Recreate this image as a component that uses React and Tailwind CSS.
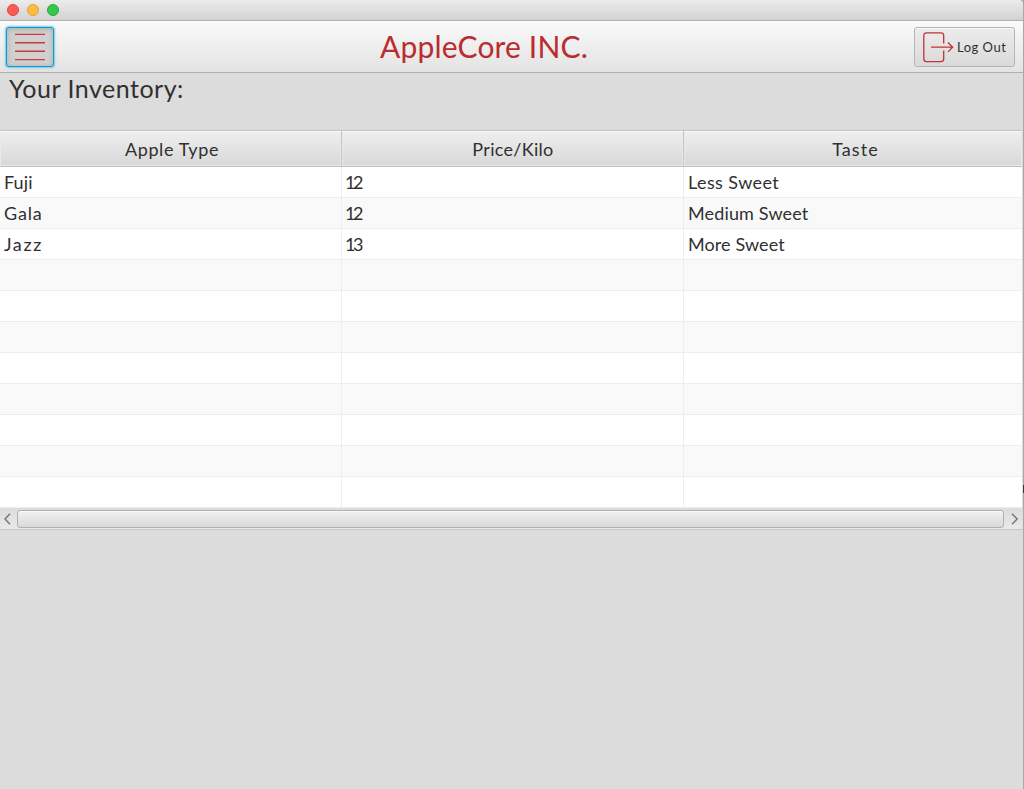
const none = { text: "", tracking: "" };

const rows = [
  [
    { text: "Fuji", tracking: "tracking-[0.1px]" },
    { text: "12", tracking: "tracking-[-2.5px]" },
    { text: "Less Sweet", tracking: "tracking-[0.4px]" },
  ],
  [
    { text: "Gala", tracking: "tracking-[0.8px]" },
    { text: "12", tracking: "tracking-[-2.5px]" },
    { text: "Medium Sweet", tracking: "tracking-[0.15px]" },
  ],
  [
    { text: "Jazz", tracking: "tracking-[1.6px]" },
    { text: "13", tracking: "tracking-[-2.5px]" },
    { text: "More Sweet", tracking: "tracking-[0.1px]" },
  ],
  ...Array.from({ length: 8 }, () => [none, none, none]),
];

const columns = [
  { label: "Apple Type", tracking: "ml-[3px] tracking-[0.6px]", width: "w-[342px]", pad: "pl-1", border: "border-r" },
  { label: "Price/Kilo", tracking: "ml-px tracking-[0.3px]", width: "w-[342px]", pad: "pl-[3px]", border: "border-r" },
  { label: "Taste", tracking: "ml-[5px] tracking-[1.1px]", width: "w-[338px]", pad: "pl-1", border: "" },
];

function TitleBar() {
  return (
    <div className="flex h-[21px] items-center gap-2 rounded-tr border-b border-[#b1b1b1] bg-linear-to-b from-[#ececec] to-[#d2d2d2] pl-[7px]">
      <span className="size-3 rounded-full border border-[#e2463f] bg-[#fc5b57]" />
      <span className="size-3 rounded-full border border-[#e1a235] bg-[#fdbc40]" />
      <span className="size-3 rounded-full border border-[#27aa35] bg-[#34c84a]" />
    </div>
  );
}

function MenuIcon() {
  return (
    <svg width="30" height="28" viewBox="0 0 30 28" stroke="#c83a3e" strokeWidth="1.4">
      <path d="M0 1.4H30M0 9.8H30M0 18.2H30M0 26.6H30" />
    </svg>
  );
}

function LogOutIcon() {
  return (
    <svg className="mt-px" width="31" height="31" viewBox="0 0 31 31" fill="none" stroke="#c23236" strokeWidth="1.3">
      <path d="M20.7 11.5V3.7Q20.7 .8 17.8 .8H3.7Q.8 .8 .8 3.7V26.8Q.8 29.7 3.7 29.7H17.8Q20.7 29.7 20.7 26.8V18.5" />
      <path d="M8 15.2H29.5M25 10.5L29.7 15.2L25 19.9" />
    </svg>
  );
}

function Toolbar() {
  return (
    <div className="flex h-[52px] items-center justify-between border-b border-[#b0b0b0] bg-linear-to-b from-[#fafafa] to-[#e3e3e3] pr-2 pl-1.5">
      <button className="flex h-10 w-12 items-center justify-center rounded-[3px] border border-[#039ed3] bg-[#d0d0d0] shadow-[0_0_2px_1px_#7cc8e4,inset_0_1px_5px_#aaaaaa]">
        <MenuIcon />
      </button>
      <h1 className="pb-0.5 text-[30px] leading-none tracking-[0.15px] text-[#ba2c30]">AppleCore INC.</h1>
      <button className="flex h-10 w-[101px] items-center gap-[3px] rounded-[3px] border border-[#b5b5b5] bg-linear-to-b from-[#ececec] to-[#dadada] pl-2 text-[13px] tracking-[0.5px] whitespace-nowrap shadow-[inset_0_1px_0_#fafafa]">
        <LogOutIcon />
        <span className="pt-0.5">Log Out</span>
      </button>
    </div>
  );
}

function InventoryTable() {
  return (
    <div className="w-[1022px] border-t border-[#c4c4c4] text-[18px]">
      <div className="flex h-9 border-b border-[#c0c0c0]">
        {columns.map((c) => (
          <div
            key={c.label}
            className={`${c.width} ${c.border} flex items-center justify-center border-[#c4c4c4] bg-linear-to-b from-[#efefef] to-[#d8d8d8] pt-0.5 shadow-[inset_0_1px_0_#f8f8f8,inset_0_0_0_1px_#e9e9e9]`}
          >
            <span className={c.tracking}>{c.label}</span>
          </div>
        ))}
      </div>
      {rows.map((row, i) => (
        <div key={i} className="flex h-[31px] border-b border-[#ededed] odd:bg-[#f9f9f9] even:bg-white">
          {row.map((cell, j) => (
            <div key={j} className={`${columns[j].width} ${columns[j].pad} ${columns[j].border} flex items-center border-[#ededed]`}>
              <span className={cell.tracking}>{cell.text}</span>
            </div>
          ))}
        </div>
      ))}
      <ScrollBar />
    </div>
  );
}

function ScrollBar() {
  return (
    <div className="flex h-[22px] items-center border-b border-[#c8c8c8] bg-linear-to-b from-[#dcdcdc] to-[#e9e9e9]">
      <svg className="mx-1" width="8" height="12" viewBox="0 0 8 12" fill="none" stroke="#777" strokeWidth="1.5">
        <path d="M6 .8L1 6L6 11.2" />
      </svg>
      <div className="ml-px h-[18px] w-[987px] rounded-[3px] border border-[#b0b0b0] bg-linear-to-b from-[#f0f0f0] to-[#dadada] shadow-[inset_0_1px_0_#fafafa]" />
      <svg className="ml-[7px]" width="8" height="12" viewBox="0 0 8 12" fill="none" stroke="#777" strokeWidth="1.5">
        <path d="M1 .8L6.2 6L1 11.2" />
      </svg>
    </div>
  );
}

export default function App() {
  return (
    <div className="flex h-[789px] w-[1024px] overflow-hidden bg-[#a8a8a8] font-['Lato',sans-serif] text-[#303030]">
      <div className="h-full w-[1023px] overflow-hidden rounded-tr bg-[#dcdcdc]">
        <TitleBar />
        <Toolbar />
        <h2 className="h-[57px] pt-0.5 pl-[9px] text-[25px] leading-[26px] tracking-[0.5px]">Your Inventory:</h2>
        <InventoryTable />
      </div>
      <div className="mt-[485px] h-2 w-px bg-[#2d3f3b]" />
    </div>
  );
}
